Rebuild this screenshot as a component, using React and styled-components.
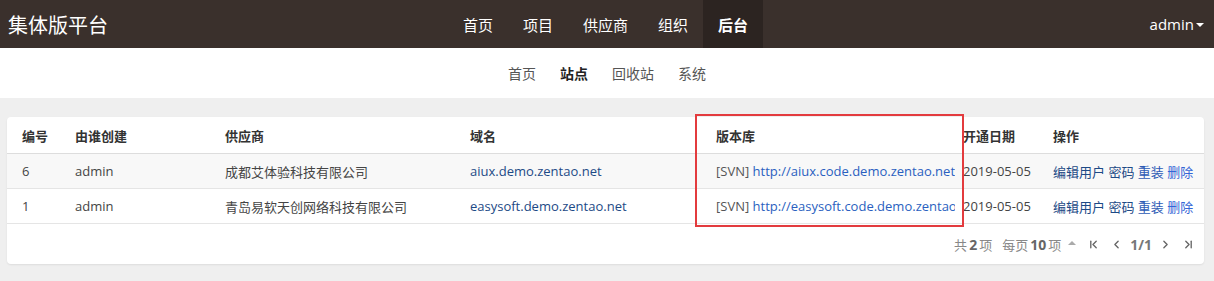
import styled, { createGlobalStyle } from "styled-components";
import { ChevronFirst, ChevronLast, ChevronLeft, ChevronRight } from "lucide-react";

const GlobalStyle = createGlobalStyle`
  html, body {
    margin: 0;
    background: #efefef;
    font-family: "Open Sans", "Noto Sans CJK SC", sans-serif;
    color: #333;
  }
`;

const Navbar = styled.div`
  height: 48px;
  background: #3a302c;
  display: flex;
  align-items: center;
  justify-content: space-between;
  position: relative;
`;

const Brand = styled.div`
  font-size: 20px;
  color: #fff;
  padding-left: 8px;
  font-family: "Noto Sans CJK SC", sans-serif;
`;

const MainNav = styled.div`
  position: absolute;
  left: 448px;
  top: 0;
  height: 48px;
  display: flex;
`;

const NavItem = styled.a`
  height: 48px;
  padding: 0 15px;
  display: flex;
  align-items: center;
  font-size: 15px;
  color: #fff;
  font-weight: ${(p) => (p.active ? "bold" : "normal")};
  background: ${(p) => (p.active ? "#2c2421" : "transparent")};
  font-family: "Noto Sans CJK SC", sans-serif;
`;

const User = styled.div`
  color: #fff;
  font-size: 15px;
  padding-right: 10px;
  display: flex;
  align-items: center;
  gap: 2px;
`;

const Caret = styled.span`
  width: 0;
  height: 0;
  border-left: 4px solid transparent;
  border-right: 4px solid transparent;
  border-top: 4px solid #fff;
  margin-top: 1px;
`;

const SubNav = styled.div`
  height: 50px;
  background: #fff;
  display: flex;
  justify-content: center;
  align-items: center;
`;

const SubItem = styled.a`
  padding: 0 12px;
  font-size: 14px;
  color: ${(p) => (p.active ? "#222" : "#555")};
  font-weight: ${(p) => (p.active ? "bold" : "normal")};
  font-family: "Noto Sans CJK SC", sans-serif;
`;

const Content = styled.div`
  padding: 19px 10px 18px 7px;
`;

const Panel = styled.div`
  position: relative;
  background: #fff;
  border-radius: 4px;
  box-shadow: 0 1px 2px rgba(0, 0, 0, 0.08);
`;

const Table = styled.table`
  width: 100%;
  border-collapse: collapse;
  table-layout: fixed;
  font-size: 13px;
`;

const Th = styled.th`
  height: 36px;
  padding: 0 8px;
  text-align: left;
  font-weight: bold;
  color: #333;
  border-bottom: 1px solid #ddd;
  white-space: nowrap;
  overflow: hidden;
  font-family: "Noto Sans CJK SC", sans-serif;
  &:first-child {
    padding-left: 15px;
  }
`;

const Row = styled.tr`
  background: ${(p) => (p.shade ? "#f8f8f8" : "#fff")};
`;

const Td = styled.td`
  height: 34px;
  padding: 0 8px;
  border-bottom: 1px solid #e5e5e5;
  white-space: nowrap;
  overflow: hidden;
  color: #444;
  &:first-child {
    padding-left: 15px;
  }
`;

const Link = styled.a`
  color: ${(p) => p.color || "#1d4a86"};
  text-decoration: none;
`;

const Muted = styled.span`
  color: #555;
`;

const Pager = styled.div`
  height: 40px;
  display: flex;
  justify-content: flex-end;
  align-items: center;
  padding-right: 4px;
  color: #888;
  font-size: 13px;
  font-family: "Noto Sans CJK SC", sans-serif;
`;

const PagerText = styled.span`
  display: flex;
  align-items: center;
  margin-right: ${(p) => p.gap || 0}px;
  & b {
    color: #666;
    font-family: "Open Sans", sans-serif;
    font-size: 14px;
    margin: 0 2px;
  }
`;

const UpCaret = styled.span`
  width: 0;
  height: 0;
  border-left: 4px solid transparent;
  border-right: 4px solid transparent;
  border-bottom: 4px solid #aaa;
  margin: 0 6px 2px 7px;
`;

const PageBtn = styled.span`
  width: 23px;
  display: flex;
  justify-content: center;
  align-items: center;
  color: #666;
`;

const Pages = styled.b`
  color: #777;
  font-size: 14px;
  font-family: "Open Sans", sans-serif;
  padding: 0 2px;
`;

const Highlight = styled.div`
  position: absolute;
  left: 688px;
  top: -3px;
  width: 265px;
  height: 109px;
  border: 2px solid #e33b3e;
  pointer-events: none;
`;

const rows = [
  {
    id: 6,
    by: "admin",
    vendor: "成都艾体验科技有限公司",
    domain: "aiux.demo.zentao.net",
    repo: "http://aiux.code.demo.zentao.net",
    date: "2019-05-05",
  },
  {
    id: 1,
    by: "admin",
    vendor: "青岛易软天创网络科技有限公司",
    domain: "easysoft.demo.zentao.net",
    repo: "http://easysoft.code.demo.zentao.net",
    date: "2019-05-05",
  },
];

export default function App() {
  return (
    <>
      <GlobalStyle />
      <Navbar>
        <Brand>集体版平台</Brand>
        <MainNav>
          <NavItem>首页</NavItem>
          <NavItem>项目</NavItem>
          <NavItem>供应商</NavItem>
          <NavItem>组织</NavItem>
          <NavItem active>后台</NavItem>
        </MainNav>
        <User>
          admin<Caret />
        </User>
      </Navbar>
      <SubNav>
        <SubItem>首页</SubItem>
        <SubItem active>站点</SubItem>
        <SubItem>回收站</SubItem>
        <SubItem>系统</SubItem>
      </SubNav>
      <Content>
        <Panel>
          <Table>
            <colgroup>
              <col style={{ width: 60 }} />
              <col style={{ width: 150 }} />
              <col style={{ width: 245 }} />
              <col style={{ width: 246 }} />
              <col style={{ width: 247 }} />
              <col style={{ width: 90 }} />
              <col />
            </colgroup>
            <thead>
              <tr>
                <Th>编号</Th>
                <Th>由谁创建</Th>
                <Th>供应商</Th>
                <Th>域名</Th>
                <Th>版本库</Th>
                <Th>开通日期</Th>
                <Th>操作</Th>
              </tr>
            </thead>
            <tbody>
              {rows.map((r, i) => (
                <Row key={r.id} shade={i === 0}>
                  <Td>{r.id}</Td>
                  <Td>{r.by}</Td>
                  <Td>{r.vendor}</Td>
                  <Td>
                    <Link>{r.domain}</Link>
                  </Td>
                  <Td>
                    <Muted>[SVN]</Muted> <Link color="#2a5fc0">{r.repo}</Link>
                  </Td>
                  <Td>{r.date}</Td>
                  <Td>
                    <Link>编辑用户</Link> <Link>密码</Link>{" "}
                    <Link color="#2d5bb5">重装</Link>{" "}
                    <Link color="#3465d6">删除</Link>
                  </Td>
                </Row>
              ))}
            </tbody>
          </Table>
          <Pager>
            <PagerText gap={10}>
              共<b>2</b>项
            </PagerText>
            <PagerText>
              每页<b>10</b>项
              <UpCaret />
            </PagerText>
            <PageBtn>
              <ChevronFirst size={13} strokeWidth={2.5} />
            </PageBtn>
            <PageBtn>
              <ChevronLeft size={13} strokeWidth={2.5} />
            </PageBtn>
            <Pages>1/1</Pages>
            <PageBtn>
              <ChevronRight size={13} strokeWidth={2.5} />
            </PageBtn>
            <PageBtn>
              <ChevronLast size={13} strokeWidth={2.5} />
            </PageBtn>
          </Pager>
          <Highlight />
        </Panel>
      </Content>
    </>
  );
}
